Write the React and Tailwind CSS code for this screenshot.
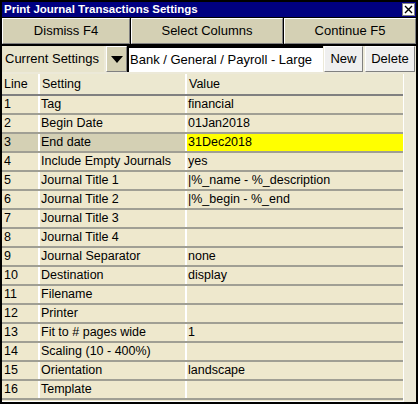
import React from 'react'

const ROWS = [
  ['1', 'Tag', 'financial'],
  ['2', 'Begin Date', '01Jan2018'],
  ['3', 'End date', '31Dec2018'],
  ['4', 'Include Empty Journals', 'yes'],
  ['5', 'Journal Title 1', '|%_name - %_description'],
  ['6', 'Journal Title 2', '|%_begin - %_end'],
  ['7', 'Journal Title 3', ''],
  ['8', 'Journal Title 4', ''],
  ['9', 'Journal Separator', 'none'],
  ['10', 'Destination', 'display'],
  ['11', 'Filename', ''],
  ['12', 'Printer', ''],
  ['13', 'Fit to # pages wide', '1'],
  ['14', 'Scaling (10 - 400%)', ''],
  ['15', 'Orientation', 'landscape'],
  ['16', 'Template', ''],
]

const raised = 'border border-t-white border-l-white border-r-[#808080] border-b-[#808080]'

export default function App() {
  return (
    <div
      className="w-[418px] h-[404px] bg-black p-[2px] text-[12.5px] text-black overflow-hidden"
      style={{ fontFamily: '"Liberation Sans", Arial, sans-serif' }}
    >
      <div className="h-full flex flex-col bg-[#ece9d8]">
        {/* title bar */}
        <div className="h-[15px] bg-[#000080] flex items-center justify-between pl-[2px] pr-[1px]">
          <span className="text-white font-bold text-[11.5px] leading-none">Print Journal Transactions Settings</span>
          <div className="w-[13px] h-[13px] bg-white border border-[#808080] flex items-center justify-center">
            <svg width="9" height="9" viewBox="0 0 9 9">
              <path d="M1 1 L8 8 M8 1 L1 8" stroke="black" strokeWidth="1.4" />
            </svg>
          </div>
        </div>

        {/* main buttons */}
        <div className="h-[29px] bg-black flex gap-[1px] pt-[1px] pb-[2px]">
          <div className={`w-[128px] bg-[#d4d0b4] ${raised} flex items-center justify-center text-[13px]`}>Dismiss F4</div>
          <div className={`w-[152px] bg-[#d4d0b4] ${raised} flex items-center justify-center text-[13px]`}>Select Columns</div>
          <div className={`flex-1 bg-[#d4d0b4] ${raised} flex items-center justify-center text-[13px]`}>Continue F5</div>
        </div>

        {/* settings selector */}
        <div className="h-[26px] flex items-stretch bg-[#ece9d8] text-[13px]">
          <div className="w-[102px] flex items-center pl-[3px] bg-[#e8e4cc]">Current Settings</div>
          <div className={`w-[21px] ml-[2px] bg-[#d4d0b4] ${raised} flex items-center justify-center`}>
            <svg width="12" height="7" viewBox="0 0 12 7"><path d="M0 0 H12 L6 7 Z" fill="black" /></svg>
          </div>
          <div className="w-[196px] bg-white border-t-2 border-l-2 border-black flex items-center pl-[1px] whitespace-nowrap overflow-hidden">
            Bank / General / Payroll - Large
          </div>
          <div className={`w-[39px] ml-[1px] bg-[#efefef] ${raised} flex items-center justify-center`}>New</div>
          <div className={`w-[50px] ml-[2px] bg-[#efefef] ${raised} flex items-center justify-center`}>Delete</div>
        </div>

        {/* table */}
        <div className="flex-1 flex flex-col pt-[2px] pr-[12px] bg-[#ece9d8]">
          <div className="border-r border-b border-white flex-1 flex flex-col">
            <div className="h-[22px] flex bg-[#ece8d0] border-b-2 border-[#808080]">
              <div className="w-[38px] pl-[2px] flex items-center border-r-2 border-white">Line</div>
              <div className="w-[147px] pl-[2px] flex items-center border-r-2 border-white">Setting</div>
              <div className="flex-1 pl-[2px] flex items-center">Value</div>
            </div>
            {ROWS.map(([n, s, v]) => {
              const sel = n === '3'
              return (
                <div key={n} className="h-[19px] flex border-b-2 border-[#a09f94] last:border-b-0">
                  <div className={`w-[38px] pl-[2px] flex items-center border-r-2 border-white ${sel ? 'bg-[#d4d0b4]' : 'bg-[#eee8cd]'}`}>{n}</div>
                  <div className={`w-[147px] pl-[1px] flex items-center border-r-2 border-white whitespace-nowrap ${sel ? 'bg-[#d4d0b4]' : 'bg-[#eee8cd]'}`}>{s}</div>
                  <div className={`flex-1 pl-[1px] flex items-center whitespace-nowrap ${sel ? 'bg-[#ffff00]' : 'bg-[#eee8cd]'}`}>{v}</div>
                </div>
              )
            })}
            <div className="flex-1 bg-[#eee8cd]" />
          </div>
        </div>
      </div>
    </div>
  )
}
